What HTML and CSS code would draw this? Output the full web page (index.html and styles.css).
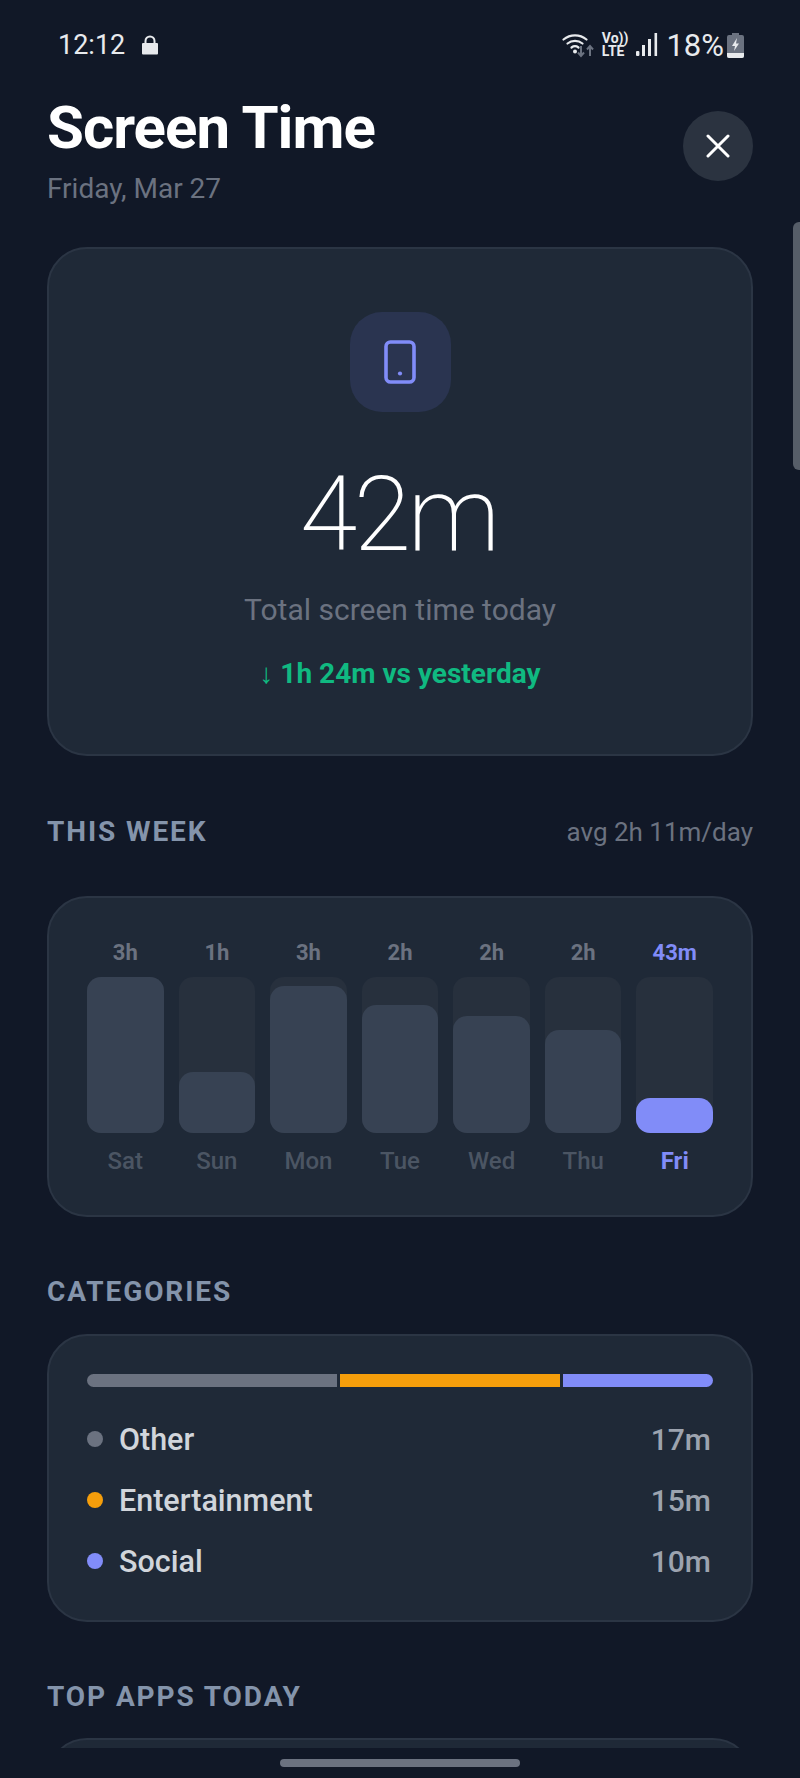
FILE: index.html
```html
<!DOCTYPE html>
<html lang="en">
<head>
    <meta charset="UTF-8">
    <meta name="viewport" content="width=device-width, initial-scale=1.0">
    <title>Screen Time</title>
    <link rel="stylesheet" href="styles.css">
</head>
<body>
<div class="screen">
    <div class="status-bar">
        <div class="status-left">
            <span class="clock">12:12</span>
            <svg class="lock" width="16" height="20" viewBox="0 0 16 20">
                <path d="M3.5 9V6a4.5 4.5 0 0 1 9 0v3" fill="none" stroke="#e8eaed" stroke-width="2"/>
                <rect x="0" y="8" width="16" height="11.5" rx="1" fill="#e8eaed"/>
            </svg>
        </div>
        <div class="status-right">
            <svg class="wifi" width="32" height="26" viewBox="0 0 32 26">
                <g fill="none" stroke="#e8eaed" stroke-width="2.2" stroke-linecap="round">
                    <path d="M1.5 7.5a18 18 0 0 1 23 0"/>
                    <path d="M5.5 11.5a12 12 0 0 1 15 0"/>
                    <path d="M9.5 15.5a6 6 0 0 1 7 0"/>
                </g>
                <circle cx="13" cy="19.5" r="2" fill="#e8eaed"/>
                <g fill="none" stroke="#6b7280" stroke-width="2">
                    <path d="M19 14v10M16 20.5l3 3.5 3-3.5"/>
                    <path d="M28 24V14M25 17.5l3-3.5 3 3.5"/>
                </g>
            </svg>
            <div class="volte"><span>Vo))</span><span>LTE</span></div>
            <svg class="signal" width="22" height="24" viewBox="0 0 22 24">
                <rect x="0" y="18" width="3.4" height="5" rx="1" fill="#e8eaed"/>
                <rect x="6" y="12" width="3" height="11" fill="#e8eaed"/>
                <rect x="12" y="6" width="3" height="17" fill="#e8eaed"/>
                <rect x="18.5" y="0" width="2.6" height="23" fill="#e8eaed"/>
            </svg>
            <span class="battery-pct">18%</span>
            <svg class="battery" width="17" height="25" viewBox="0 0 17 25">
                <path d="M5 0h7v2h3a2 2 0 0 1 2 2v19a2 2 0 0 1-2 2H2a2 2 0 0 1-2-2V4a2 2 0 0 1 2-2h3z" fill="#6b7280"/>
                <path d="M0 20h17v3a2 2 0 0 1-2 2H2a2 2 0 0 1-2-2z" fill="#e8eaed"/>
                <path d="M10 5l-5 8h3l-1 5 5-7.5H9z" fill="#e8eaed"/>
            </svg>
        </div>
    </div>

    <main class="content">
        <header class="page-header">
            <div>
                <h1>Screen Time</h1>
                <div class="date">Friday, Mar 27</div>
            </div>
            <button class="close-btn" type="button">
                <svg width="24" height="24" viewBox="0 0 24 24">
                    <path d="M2 2l20 20M22 2L2 22" stroke="#fff" stroke-width="3" stroke-linecap="round"/>
                </svg>
            </button>
        </header>

        <section class="card hero">
            <div class="hero-icon">
                <svg width="32" height="44" viewBox="0 0 32 44">
                    <rect x="2" y="2" width="28" height="40" rx="4.5" fill="none" stroke="#818cf8" stroke-width="3.6"/>
                    <circle cx="16" cy="33.5" r="2.1" fill="#818cf8"/>
                </svg>
            </div>
            <div class="hero-value">42m</div>
            <div class="hero-label">Total screen time today</div>
            <div class="hero-delta">↓ 1h 24m vs yesterday</div>
        </section>

        <div class="section-head week-head">
            <h2>THIS WEEK</h2>
            <span class="section-note">avg 2h 11m/day</span>
        </div>

        <section class="card week">
            <div class="day">
                <span class="day-value">3h</span>
                <div class="track"><div class="fill" style="height: 156px"></div></div>
                <span class="day-name">Sat</span>
            </div>
            <div class="day">
                <span class="day-value">1h</span>
                <div class="track"><div class="fill" style="height: 61px"></div></div>
                <span class="day-name">Sun</span>
            </div>
            <div class="day">
                <span class="day-value">3h</span>
                <div class="track"><div class="fill" style="height: 147px"></div></div>
                <span class="day-name">Mon</span>
            </div>
            <div class="day">
                <span class="day-value">2h</span>
                <div class="track"><div class="fill" style="height: 128px"></div></div>
                <span class="day-name">Tue</span>
            </div>
            <div class="day">
                <span class="day-value">2h</span>
                <div class="track"><div class="fill" style="height: 117px"></div></div>
                <span class="day-name">Wed</span>
            </div>
            <div class="day">
                <span class="day-value">2h</span>
                <div class="track"><div class="fill" style="height: 103px"></div></div>
                <span class="day-name">Thu</span>
            </div>
            <div class="day today">
                <span class="day-value">43m</span>
                <div class="track"><div class="fill" style="height: 35px"></div></div>
                <span class="day-name">Fri</span>
            </div>
        </section>

        <div class="section-head cat-head">
            <h2>CATEGORIES</h2>
        </div>

        <section class="card categories">
            <div class="cat-bar">
                <div class="seg other" style="flex: 250"></div>
                <div class="seg entertainment" style="flex: 220"></div>
                <div class="seg social" style="flex: 150"></div>
            </div>
            <div class="cat-row">
                <span class="dot other"></span>
                <span class="cat-name">Other</span>
                <span class="cat-time">17m</span>
            </div>
            <div class="cat-row">
                <span class="dot entertainment"></span>
                <span class="cat-name">Entertainment</span>
                <span class="cat-time">15m</span>
            </div>
            <div class="cat-row">
                <span class="dot social"></span>
                <span class="cat-name">Social</span>
                <span class="cat-time">10m</span>
            </div>
        </section>

        <div class="section-head apps-head">
            <h2>TOP APPS TODAY</h2>
        </div>

        <section class="card apps"></section>
    </main>

    <div class="scroll-thumb"></div>

    <div class="nav-strip">
        <div class="home-bar"></div>
    </div>
</div>
</body>
</html>
```

FILE: styles.css
```css
:root {
    --bg: #111827;
    --card: #1f2937;
    --border: #2b3544;
    --accent: #818cf8;
    --muted: #6b7280;
}
* {
    box-sizing: border-box;
}
body {
    margin: 0;
    background: var(--bg);
    font-family: Roboto, 'Liberation Sans', sans-serif;
}
.screen {
    position: relative;
    width: 800px;
    height: 1778px;
    display: flex;
    flex-direction: column;
    overflow: hidden;
    background: var(--bg);
}

/* status bar */
.status-bar {
    flex: none;
    height: 92px;
    padding: 0 47px 2px 58px;
    display: flex;
    justify-content: space-between;
    align-items: center;
    color: #e8eaed;
}
.status-left {
    display: flex;
    align-items: center;
    gap: 17px;
}
.clock {
    font-size: 27px;
}
.status-right {
    display: flex;
    align-items: center;
    margin-right: 9px;
}
.volte {
    display: flex;
    flex-direction: column;
    margin: 0 8px 0 8px;
    font-size: 14px;
    font-weight: 700;
    line-height: 13px;
}
.battery-pct {
    font-size: 31px;
    margin: 0 3px 0 8px;
}

/* scrolling part */
.content {
    flex: 1;
    min-height: 0;
    overflow: hidden;
    padding: 0 47px;
}
.page-header {
    display: flex;
    justify-content: space-between;
    align-items: flex-start;
}
h1 {
    margin: 0;
    font-size: 60px;
    line-height: 72px;
    font-weight: 700;
    letter-spacing: -1px;
    color: #fff;
}
.date {
    margin-top: 8px;
    font-size: 28px;
    line-height: 34px;
    color: var(--muted);
}
.close-btn {
    margin-top: 19px;
    width: 70px;
    height: 70px;
    padding: 0;
    border: none;
    border-radius: 50%;
    background: #2b3340;
    display: flex;
    align-items: center;
    justify-content: center;
}
.card {
    background: var(--card);
    border: 2px solid var(--border);
    border-radius: 40px;
}

/* hero */
.hero {
    margin-top: 41px;
    height: 509px;
    padding-top: 63px;
    display: flex;
    flex-direction: column;
    align-items: center;
}
.hero-icon {
    width: 101px;
    height: 100px;
    border-radius: 32px;
    background: #2a3450;
    display: flex;
    align-items: center;
    justify-content: center;
}
.hero-value {
    margin-top: 43px;
    margin-right: 3px;
    font-size: 104px;
    line-height: 120px;
    font-weight: 200;
    letter-spacing: -3.5px;
    color: #fff;
}
.hero-label {
    margin-top: 17px;
    font-size: 30px;
    line-height: 36px;
    color: var(--muted);
}
.hero-delta {
    margin-top: 29px;
    font-size: 28px;
    line-height: 34px;
    font-weight: 700;
    color: #10b981;
}

/* section headings */
.section-head {
    display: flex;
    justify-content: space-between;
    align-items: center;
}
h2 {
    margin: 0;
    font-size: 28px;
    line-height: 32px;
    font-weight: 700;
    letter-spacing: 1.9px;
    color: #8494ab;
}
.section-note {
    font-size: 26px;
    color: var(--muted);
}
.week-head {
    margin-top: 60px;
}
.cat-head {
    margin-top: 59px;
}
.apps-head {
    margin-top: 59px;
}

/* week chart */
.week {
    margin-top: 48px;
    height: 321px;
    padding: 38px 38px 0;
    display: flex;
    gap: 15px;
}
.day {
    flex: 1;
    display: flex;
    flex-direction: column;
    align-items: center;
}
.day-value {
    height: 34px;
    font-size: 22px;
    line-height: 34px;
    font-weight: 700;
    color: var(--muted);
}
.track {
    margin-top: 7px;
    width: 100%;
    height: 156px;
    border-radius: 14px;
    background: #27303d;
    display: flex;
    align-items: flex-end;
}
.fill {
    width: 100%;
    border-radius: 14px;
    background: #374253;
}
.day-name {
    margin-top: 11px;
    font-size: 24px;
    line-height: 34px;
    font-weight: 500;
    color: #4b5563;
}
.today .day-value,
.today .day-name {
    color: var(--accent);
}
.today .day-name {
    font-weight: 700;
}
.today .fill {
    background: var(--accent);
}

/* categories */
.categories {
    margin-top: 26px;
    height: 288px;
    padding: 38px 38px 0;
}
.cat-bar {
    height: 13px;
    display: flex;
    gap: 3px;
    border-radius: 7px;
    overflow: hidden;
    margin-bottom: 22px;
}
.seg.other, .dot.other {
    background: var(--muted);
}
.seg.entertainment, .dot.entertainment {
    background: #f59e0b;
}
.seg.social, .dot.social {
    background: var(--accent);
}
.cat-row {
    height: 61px;
    display: flex;
    align-items: center;
}
.dot {
    width: 16px;
    height: 16px;
    border-radius: 50%;
    margin-right: 16px;
    position: relative;
    top: -1px;
}
.cat-name {
    flex: 1;
    font-size: 30.5px;
    font-weight: 500;
    color: #d1d5db;
}
.cat-time {
    margin-right: 2px;
    font-size: 30px;
    font-weight: 500;
    color: #9ca3af;
}

/* cut off by the nav strip */
.apps {
    margin-top: 25px;
    height: 300px;
}

.scroll-thumb {
    position: absolute;
    top: 222px;
    right: 0;
    width: 7px;
    height: 248px;
    border-radius: 6px 0 0 6px;
    background: #565d68;
}
.nav-strip {
    flex: none;
    height: 30px;
    padding-top: 11px;
    display: flex;
    justify-content: center;
}
.home-bar {
    width: 240px;
    height: 8px;
    border-radius: 4px;
    background: #6b7280;
}
```
